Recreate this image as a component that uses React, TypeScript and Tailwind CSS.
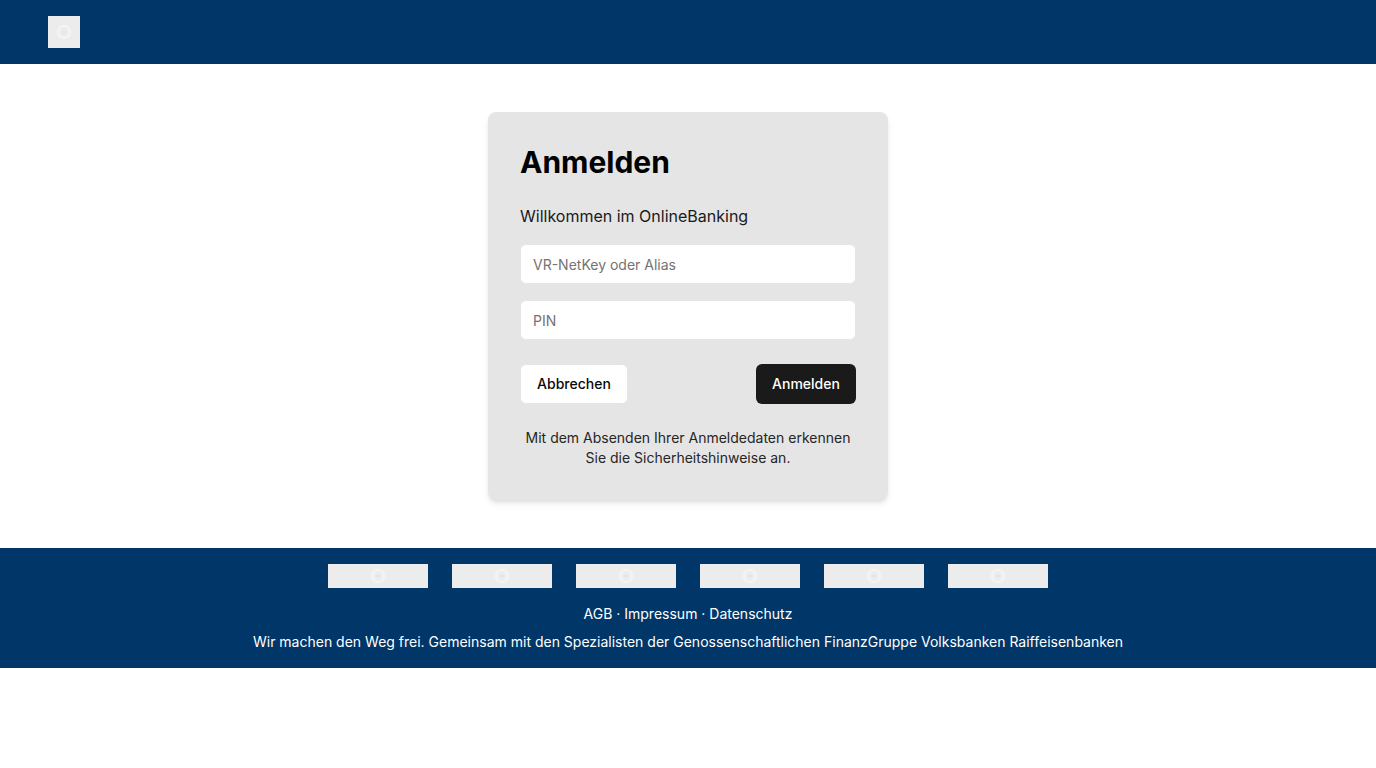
import React from "react";

function Placeholder({ className }: { className: string }) {
  return (
    <div className={`flex items-center justify-center bg-[#ececec] ${className}`}>
      <svg width="16" height="16" viewBox="0 0 16 16">
        <circle cx="8" cy="8" r="6" fill="none" stroke="#f3f3f3" strokeWidth="2.5" />
        <circle cx="8" cy="8" r="1.5" fill="#e2e2e2" />
      </svg>
    </div>
  );
}

export default function App() {
  const partners = [1, 2, 3, 4, 5, 6];
  return (
    <div className="min-h-screen bg-white font-['Inter','Liberation_Sans',sans-serif]">
      <header className="h-16 bg-[#003668] px-12 flex items-center">
        <Placeholder className="h-8 w-8" />
      </header>

      <main className="flex justify-center py-12">
        <div className="w-[400px] rounded-lg bg-[#e5e5e5] p-8 shadow-md">
          <h1 className="text-3xl font-bold text-black">Anmelden</h1>
          <p className="mt-6 text-base text-[#1a1a1a]">Willkommen im OnlineBanking</p>

          <input
            type="text"
            placeholder="VR-NetKey oder Alias"
            className="mt-4 block h-10 w-full rounded-md border border-[#e5e5e5] bg-white px-3 text-sm text-gray-900 placeholder:text-[#737373] outline-none"
          />
          <input
            type="password"
            placeholder="PIN"
            className="mt-4 block h-10 w-full rounded-md border border-[#e5e5e5] bg-white px-3 text-sm text-gray-900 placeholder:text-[#737373] outline-none"
          />

          <div className="mt-6 flex items-center justify-between">
            <button className="h-10 w-[108px] rounded-md border border-[#e5e5e5] bg-white text-sm font-medium text-[#0a0a0a]">
              Abbrechen
            </button>
            <button className="h-10 w-[100px] rounded-md bg-[#1a1a1a] text-sm font-medium text-white">
              Anmelden
            </button>
          </div>

          <p className="mt-6 text-center text-sm leading-5 text-[#262626]">
            Mit dem Absenden Ihrer Anmeldedaten erkennen
            <br />
            Sie die Sicherheitshinweise an.
          </p>
        </div>
      </main>

      <footer className="bg-[#003668] pt-4 pb-4 text-white">
        <div className="flex justify-center gap-6">
          {partners.map((p) => (
            <Placeholder key={p} className="h-6 w-[100px]" />
          ))}
        </div>
        <p className="mt-4 text-center text-sm leading-5">AGB · Impressum · Datenschutz</p>
        <p className="mt-2 text-center text-sm leading-5">
          Wir machen den Weg frei. Gemeinsam mit den Spezialisten der Genossenschaftlichen FinanzGruppe Volksbanken Raiffeisenbanken
        </p>
      </footer>
    </div>
  );
}
